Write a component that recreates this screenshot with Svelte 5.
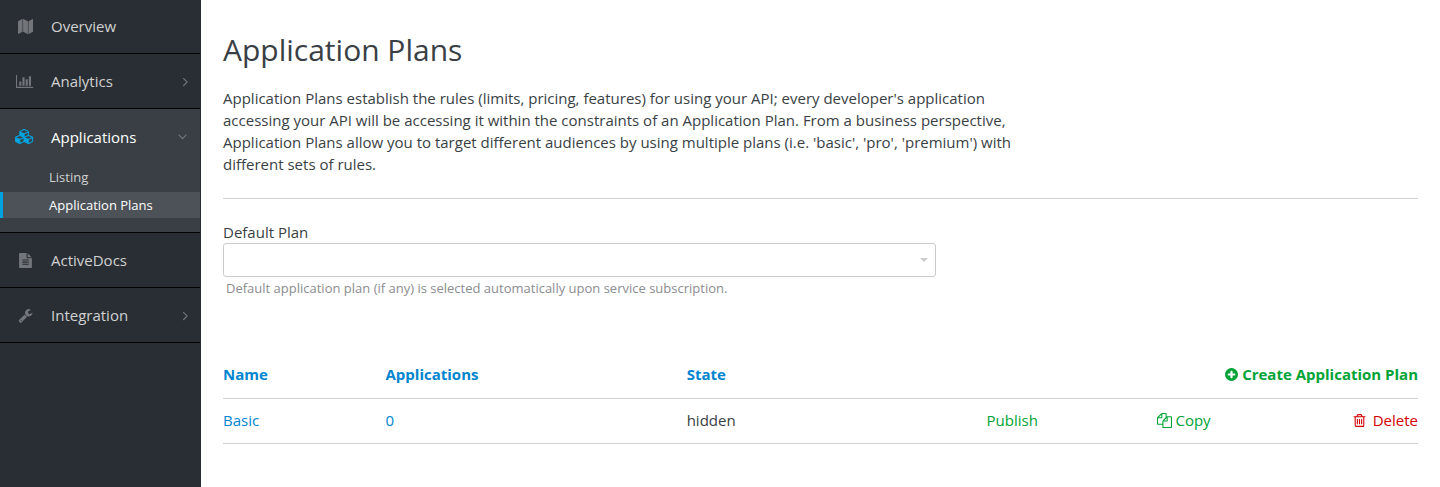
<script>
  const icons = {
    map: { w: 1792, d: 'M512 0q13 0 22.5 9.5t9.5 22.5v1472q0 20-17 28l-480 256q-7 4-15 4-13 0-22.5-9.5t-9.5-22.5v-1472q0-20 17-28l480-256q7-4 15-4zm1248 0q13 0 22.5 9.5t9.5 22.5v1472q0 20-17 28l-480 256q-7 4-15 4-13 0-22.5-9.5t-9.5-22.5v-1472q0-20 17-28l480-256q7-4 15-4zm-1120 0q8 0 14 3l512 256q18 10 18 29v1472q0 13-9.5 22.5t-22.5 9.5q-8 0-14-3l-512-256q-18-10-18-29v-1472q0-13 9.5-22.5t22.5-9.5z' },
    chart: { w: 2048, d: 'M640 896v512h-256v-512h256zm384-512v1024h-256v-1024h256zm1024 1152v128h-2048v-1536h128v1408h1920zm-640-896v768h-256v-768h256zm384-384v1152h-256v-1152h256z' },
    cubes: { w: 2304, d: 'M640 1632l384-192v-314l-384 164v342zm-64-454l404-173-404-173-404 173zm1088 454l384-192v-314l-384 164v342zm-64-454l404-173-404-173-404 173zm-448-293l384-165v-266l-384 164v267zm-64-379l441-189-441-189-441 189zm1088 518v416q0 36-19 67t-52 47l-448 224q-25 14-57 14t-57-14l-448-224q-4-2-7-4-2 2-7 4l-448 224q-25 14-57 14t-57-14l-448-224q-33-16-52-47t-19-67v-416q0-38 21.5-70t56.5-48l434-186v-400q0-38 21.5-70t56.5-48l448-192q23-10 50-10t50 10l448 192q35 16 56.5 48t21.5 70v400l434 186q36 16 57 48t21 70z' },
    file: { w: 1792, d: 'M1596 476q14 14 28 36h-472v-472q22 14 36 28zm-476 164h544v1056q0 40-28 68t-68 28h-1344q-40 0-68-28t-28-68v-1600q0-40 28-68t68-28h800v544q0 40 28 68t68 28zm160 736v-64q0-14-9-23t-23-9h-704q-14 0-23 9t-9 23v64q0 14 9 23t23 9h704q14 0 23-9t9-23zm0-256v-64q0-14-9-23t-23-9h-704q-14 0-23 9t-9 23v64q0 14 9 23t23 9h704q14 0 23-9t9-23zm0-256v-64q0-14-9-23t-23-9h-704q-14 0-23 9t-9 23v64q0 14 9 23t23 9h704q14 0 23-9t9-23z' },
    wrench: { w: 1792, d: 'M448 1472q0-26-19-45t-45-19-45 19-19 45 19 45 45 19 45-19 19-45zm644-420l-682 682q-37 37-90 37-52 0-91-37l-106-108q-38-36-38-90 0-53 38-91l681-681q39 98 114.5 173.5t173.5 114.5zm634-435q0 39-23 106-47 134-164.5 217.5t-258.5 83.5q-185 0-316.5-131.5t-131.5-316.5 131.5-316.5 316.5-131.5q58 0 121.5 16.5t107.5 46.5q16 11 16 28t-16 28l-293 169v224l193 107q5-3 79-48.5t135.5-81 70.5-35.5q15 0 23.5 10t8.5 25z' },
    right: { w: 1792, d: 'M1171 960q0 13-10 23l-466 466q-10 10-23 10t-23-10l-50-50q-10-10-10-23t10-23l393-393-393-393q-10-10-10-23t10-23l50-50q10-10 23-10t23 10l466 466q10 10 10 23z' },
    down: { w: 1792, d: 'M1395 736q0 13-10 23l-466 466q-10 10-23 10t-23-10l-466-466q-10-10-10-23t10-23l50-50q10-10 23-10t23 10l393 393 393-393q10-10 23-10t23 10l50 50q10 10 10 23z' },
    plus: { w: 1792, d: 'M1344 960v-128q0-26-19-45t-45-19h-256v-256q0-26-19-45t-45-19h-128q-26 0-45 19t-19 45v256h-256q-26 0-45 19t-19 45v128q0 26 19 45t45 19h256v256q0 26 19 45t45 19h128q26 0 45-19t19-45v-256h256q26 0 45-19t19-45zm320-64q0 209-103 385.5t-279.5 279.5-385.5 103-385.5-103-279.5-279.5-103-385.5 103-385.5 279.5-279.5 385.5-103 385.5 103 279.5 279.5 103 385.5z' },
    copy: { w: 1792, d: 'M1696 384q40 0 68 28t28 68v1216q0 40-28 68t-68 28h-960q-40 0-68-28t-28-68v-288h-544q-40 0-68-28t-28-68v-672q0-40 20-88t48-76l408-408q28-28 76-48t88-20h416q40 0 68 28t28 68v328q68-40 128-40h416zm-544 213l-299 299h299v-299zm-640-384l-299 299h299v-299zm196 647l316-316v-416h-384v416q0 40-28 68t-68 28h-416v640h512v-256q0-40 20-88t48-76zm956 804v-1152h-384v416q0 40-28 68t-68 28h-416v640h896z' },
    trash: { w: 1792, d: 'M704 736v576q0 14-9 23t-23 9h-64q-14 0-23-9t-9-23v-576q0-14 9-23t23-9h64q14 0 23 9t9 23zm256 0v576q0 14-9 23t-23 9h-64q-14 0-23-9t-9-23v-576q0-14 9-23t23-9h64q14 0 23 9t9 23zm256 0v576q0 14-9 23t-23 9h-64q-14 0-23-9t-9-23v-576q0-14 9-23t23-9h64q14 0 23 9t9 23zm128 724v-948h-896v948q0 22 7 40.5t14.5 27 10.5 8.5h832q3 0 10.5-8.5t14.5-27 7-40.5zm-672-1076h448l-48-117q-7-9-17-11h-317q-10 2-17 11zm928 32v64q0 14-9 23t-23 9h-96v948q0 83-47 143.5t-113 60.5h-832q-66 0-113-58.5t-47-141.5v-952h-96q-14 0-23-9t-9-23v-64q0-14 9-23t23-9h309l70-167q15-37 54-63t79-26h320q40 0 79 26t54 63l70 167h309q14 0 23 9t9 23z' },
  };

  const sections = [
    { label: 'Overview', icon: 'map' },
    { label: 'Analytics', icon: 'chart', expandable: true },
    { label: 'Applications', icon: 'cubes', expandable: true, active: true, children: ['Listing', 'Application Plans'] },
    { label: 'ActiveDocs', icon: 'file' },
    { label: 'Integration', icon: 'wrench', expandable: true },
  ];
  const plans = [{ name: 'Basic', applications: 0, state: 'hidden' }];
</script>

{#snippet icon(name)}
  <svg class="icon {name}" viewBox="0 0 {icons[name].w} 1792" aria-hidden="true"><path d={icons[name].d} /></svg>
{/snippet}

<div class="layout">
  <nav>
    <ul>
      {#each sections as section}
        <li class="section" class:active={section.active}>
          <a class="head" href="#top">
            <span class="slot">{@render icon(section.icon)}</span>
            <span class="label">{section.label}</span>
            {#if section.expandable}
              {@render icon(section.active ? 'down' : 'right')}
            {/if}
          </a>
          {#if section.children}
            <ul class="sub">
              {#each section.children as child}
                <li><a href="#top" class:current={child === 'Application Plans'}>{child}</a></li>
              {/each}
            </ul>
          {/if}
        </li>
      {/each}
    </ul>
  </nav>

  <main>
    <h1>Application Plans</h1>
    <p class="intro">
      Application Plans establish the rules (limits, pricing, features) for using your API; every developer's application
      accessing your API will be accessing it within the constraints of an Application Plan. From a business perspective,
      Application Plans allow you to target different audiences by using multiple plans (i.e. 'basic', 'pro', 'premium')
      with different sets of rules.
    </p>
    <hr />
    <form>
      <label for="default-plan">Default Plan</label>
      <div class="select">
        <select id="default-plan"><option></option></select>
      </div>
      <p class="hint">Default application plan (if any) is selected automatically upon service subscription.</p>
    </form>
    <table>
      <colgroup>
        <col class="c-name" /><col class="c-apps" /><col class="c-state" /><col class="c-publish" /><col class="c-copy" /><col />
      </colgroup>
      <thead>
        <tr>
          <th><a href="#top">Name</a></th>
          <th><a href="#top">Applications</a></th>
          <th><a href="#top">State</a></th>
          <th colspan="3" class="end"><a class="action" href="#top">{@render icon('plus')}Create Application Plan</a></th>
        </tr>
      </thead>
      <tbody>
        {#each plans as plan}
          <tr>
            <td><a href="#top">{plan.name}</a></td>
            <td><a href="#top">{plan.applications}</a></td>
            <td>{plan.state}</td>
            <td><a class="action" href="#top">Publish</a></td>
            <td><a class="action" href="#top">{@render icon('copy')}Copy</a></td>
            <td class="end"><a class="action delete" href="#top">{@render icon('trash')}Delete</a></td>
          </tr>
        {/each}
      </tbody>
    </table>
  </main>
</div>

<style>
  :global(body) {
    margin: 0;
    background: #fff;
  }
  .layout {
    display: flex;
    min-height: 100vh;
    font: 15px/22px 'Open Sans', sans-serif;
    color: #393f44;
  }
  a {
    color: #0085cf;
    text-decoration: none;
  }
  ul {
    list-style: none;
    margin: 0;
    padding: 0;
  }
  .icon {
    display: block;
    height: 15px;
    fill: currentColor;
    flex: none;
  }

  nav {
    flex: none;
    width: 200px;
    background: #292e34;
    border-right: 1px solid #292e34;
  }
  nav > ul {
    margin-top: -1px;
  }
  .section {
    border-bottom: 1px solid #030303;
  }
  .head {
    display: flex;
    align-items: center;
    height: 54px;
    padding-right: 7px;
    color: #d1d1d1;
  }
  .slot {
    display: flex;
    justify-content: center;
    width: 50px;
    color: #72767b;
  }
  .label {
    flex: 1;
    padding-left: 1px;
  }
  .head > .icon {
    color: #72767b;
  }
  .active {
    background: #393f44;
  }
  .active .head {
    height: 55px;
    padding-right: 10px;
    color: #fff;
    font-weight: 500;
  }
  .active .slot {
    color: #00a3e0;
  }
  .sub {
    display: grid;
    gap: 2px;
    padding-bottom: 14px;
  }
  .sub a {
    display: block;
    padding-left: 46px;
    border-left: 3px solid transparent;
    color: #d1d1d1;
    font-size: 13px;
    line-height: 26px;
  }
  .sub .current {
    background: #4d5258;
    border-color: #00a3e0;
    color: #fff;
    font-weight: 500;
  }

  main {
    flex: 1;
    min-width: 0;
    padding: 30px 22px;
  }
  h1 {
    margin: 0;
    font-size: 30px;
    line-height: 40px;
    font-weight: 400;
  }
  .intro {
    max-width: 800px;
    margin: 17px 0 23px;
  }
  hr {
    margin: 0;
    border: 0;
    border-top: 1px solid #d1d1d1;
  }
  form {
    padding-top: 22px;
  }
  label {
    display: block;
  }
  .select {
    position: relative;
    max-width: 713px;
  }
  .select::after {
    content: '';
    position: absolute;
    right: 8px;
    top: 15px;
    border: 4px solid transparent;
    border-top-color: #ccc;
    border-bottom: 0;
    pointer-events: none;
  }
  select {
    display: block;
    box-sizing: border-box;
    width: 100%;
    height: 34px;
    appearance: none;
    border: 1px solid #ccc;
    border-radius: 3px;
    background: #fff;
    font: inherit;
  }
  .hint {
    margin: 0 3px;
    color: #8b8d8f;
    font-size: 13px;
  }

  table {
    width: 100%;
    margin-top: 52px;
    border-collapse: collapse;
    table-layout: fixed;
  }
  .c-name { width: 13.6%; }
  .c-apps { width: 25.2%; }
  .c-state { width: 25.1%; }
  .c-publish { width: 14.3%; }
  .c-copy { width: 10%; }
  th,
  td {
    padding: 10px 0 12px;
    border-bottom: 1px solid #d1d1d1;
    text-align: left;
  }
  th {
    padding: 12px 0 13px;
    font-weight: 700;
  }
  .end {
    text-align: right;
  }
  .action {
    display: inline-flex;
    align-items: center;
    gap: 3px;
    vertical-align: top;
    color: #00a335;
  }
  .delete {
    gap: 6px;
    color: #d10000;
  }
</style>
